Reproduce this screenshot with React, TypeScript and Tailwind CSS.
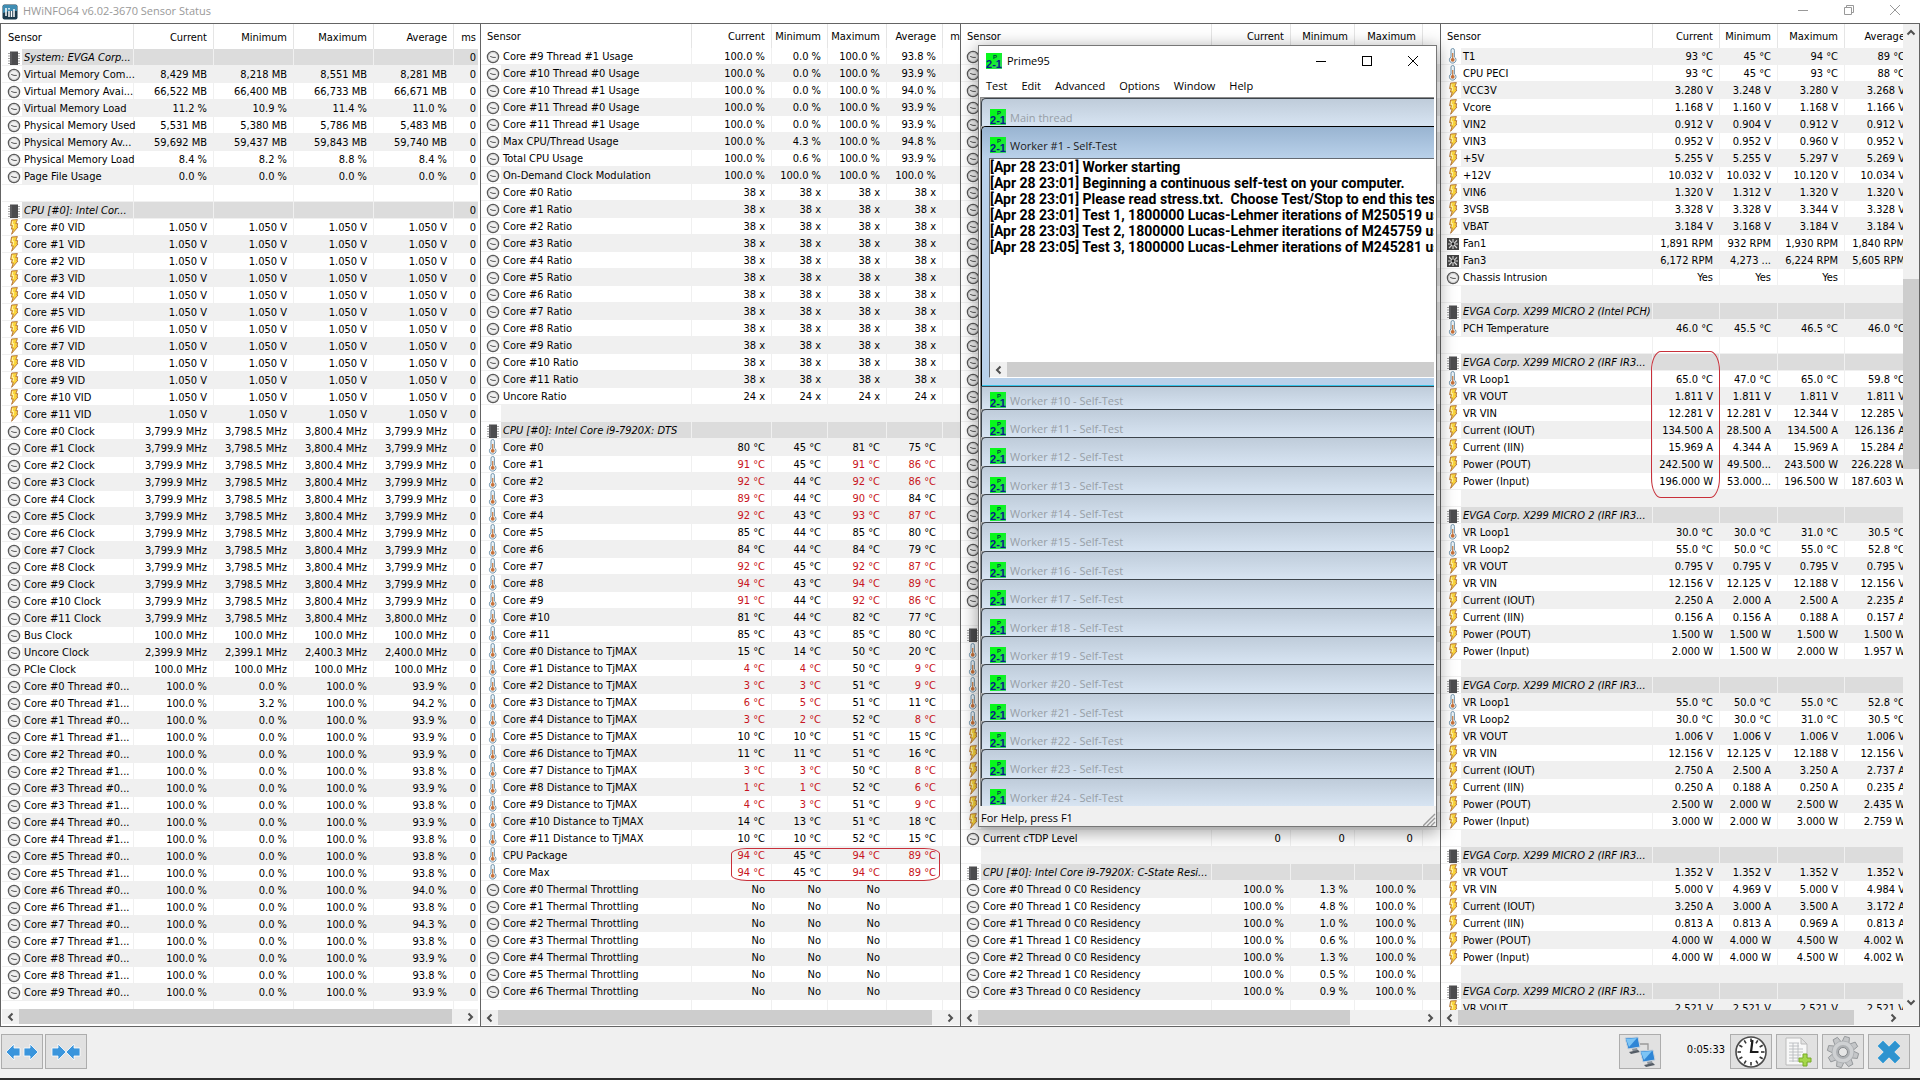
import React from "react";

type Kind = "clock" | "bolt" | "temp" | "fan" | "chip" | "none";
type Row = { kind: Kind; name: string; values: string[]; section?: boolean };

const row = (kind: Kind, name: string, values: string): Row => ({
  kind,
  name,
  values: values === "" ? [] : values.split("|"),
});
const section = (name: string, values = ""): Row => ({ ...row("chip", name, values), section: true });
const blank = (): Row => row("none", "", "");
const range = (n: number, from = 0) => Array.from({ length: n }, (_, i) => i + from);

const threadUsage = [
  "0.0 %|100.0 %|93.9 %", "3.2 %|100.0 %|94.2 %",
  "0.0 %|100.0 %|93.9 %", "0.0 %|100.0 %|93.9 %",
  "0.0 %|100.0 %|93.9 %", "0.0 %|100.0 %|93.8 %",
  "0.0 %|100.0 %|93.9 %", "0.0 %|100.0 %|93.8 %",
  "0.0 %|100.0 %|93.9 %", "0.0 %|100.0 %|93.8 %",
  "0.0 %|100.0 %|93.8 %", "0.0 %|100.0 %|93.8 %",
  "0.0 %|100.0 %|94.0 %", "0.0 %|100.0 %|93.8 %",
  "0.0 %|100.0 %|94.3 %", "0.0 %|100.0 %|93.8 %",
  "0.0 %|100.0 %|93.9 %", "0.0 %|100.0 %|93.8 %",
  "0.0 %|100.0 %|93.9 %",
];

const systemRows: Row[] = [
  section("System: EVGA Corp...", "||||0"),
  row("clock", "Virtual Memory Com...", "8,429 MB|8,218 MB|8,551 MB|8,281 MB|0"),
  row("clock", "Virtual Memory Avai...", "66,522 MB|66,400 MB|66,733 MB|66,671 MB|0"),
  row("clock", "Virtual Memory Load", "11.2 %|10.9 %|11.4 %|11.0 %|0"),
  row("clock", "Physical Memory Used", "5,531 MB|5,380 MB|5,786 MB|5,483 MB|0"),
  row("clock", "Physical Memory Av...", "59,692 MB|59,437 MB|59,843 MB|59,740 MB|0"),
  row("clock", "Physical Memory Load", "8.4 %|8.2 %|8.8 %|8.4 %|0"),
  row("clock", "Page File Usage", "0.0 %|0.0 %|0.0 %|0.0 %|0"),
  blank(),
  section("CPU [#0]: Intel Cor...", "||||0"),
  ...range(12).map((i) => row("bolt", `Core #${i} VID`, "1.050 V|1.050 V|1.050 V|1.050 V|0")),
  ...range(12).map((i) =>
    row("clock", `Core #${i} Clock`, `3,799.9 MHz|3,798.5 MHz|3,800.4 MHz|${i === 11 ? "3,800.0" : "3,799.9"} MHz|0`),
  ),
  row("clock", "Bus Clock", "100.0 MHz|100.0 MHz|100.0 MHz|100.0 MHz|0"),
  row("clock", "Uncore Clock", "2,399.9 MHz|2,399.1 MHz|2,400.3 MHz|2,400.0 MHz|0"),
  row("clock", "PCIe Clock", "100.0 MHz|100.0 MHz|100.0 MHz|100.0 MHz|0"),
  ...threadUsage.map((v, i) => row("clock", `Core #${Math.floor(i / 2)} Thread #${i % 2}...`, `100.0 %|${v}|0`)),
  blank(),
];

// A leading "!" marks a reading past its alarm limit.
const dts = [
  "80|45|81|75", "!91|45|!91|!86", "!92|44|!92|!86", "!89|44|!90|84", "!92|43|!93|!87", "85|44|85|80",
  "84|44|84|79", "!92|45|!92|!87", "!94|43|!94|!89", "!91|44|!92|!86", "81|44|82|77", "85|43|85|80",
];
const distance = [
  "15|14|50|20", "!4|!4|50|!9", "!3|!3|51|!9", "!6|!5|51|11", "!3|!2|52|!8", "10|10|51|15",
  "11|11|51|16", "!3|!3|50|!8", "!1|!1|52|!6", "!4|!3|51|!9", "14|13|51|18", "10|10|52|15",
];
const celsius = (v: string) => v.split("|").map((x) => `${x} °C`).join("|");

const cpuRows: Row[] = [
  row("clock", "Core #9 Thread #1 Usage", "100.0 %|0.0 %|100.0 %|93.8 %"),
  row("clock", "Core #10 Thread #0 Usage", "100.0 %|0.0 %|100.0 %|93.9 %"),
  row("clock", "Core #10 Thread #1 Usage", "100.0 %|0.0 %|100.0 %|94.0 %"),
  row("clock", "Core #11 Thread #0 Usage", "100.0 %|0.0 %|100.0 %|93.9 %"),
  row("clock", "Core #11 Thread #1 Usage", "100.0 %|0.0 %|100.0 %|93.9 %"),
  row("clock", "Max CPU/Thread Usage", "100.0 %|4.3 %|100.0 %|94.8 %"),
  row("clock", "Total CPU Usage", "100.0 %|0.6 %|100.0 %|93.9 %"),
  row("clock", "On-Demand Clock Modulation", "100.0 %|100.0 %|100.0 %|100.0 %"),
  ...range(12).map((i) => row("clock", `Core #${i} Ratio`, "38 x|38 x|38 x|38 x")),
  row("clock", "Uncore Ratio", "24 x|24 x|24 x|24 x"),
  blank(),
  section("CPU [#0]: Intel Core i9-7920X: DTS"),
  ...dts.map((v, i) => row("temp", `Core #${i}`, celsius(v))),
  ...distance.map((v, i) => row("temp", `Core #${i} Distance to TjMAX`, celsius(v))),
  row("temp", "CPU Package", celsius("!94|45|!94|!89")),
  row("temp", "Core Max", celsius("!94|45|!94|!89")),
  ...range(7).map((i) => row("clock", `Core #${i} Thermal Throttling`, "No|No|No|")),
  blank(),
];

const residency = ["1.3", "4.8", "1.0", "0.6", "1.3", "0.5", "0.9"];
const cstateRows: Row[] = [
  ...range(33).map(() => row("clock", "", "")),
  blank(),
  section(""),
  ...range(5).map(() => row("temp", "", "")),
  ...range(6).map(() => row("bolt", "", "")),
  row("clock", "Current cTDP Level", "0 |0 |0 "),
  blank(),
  section("CPU [#0]: Intel Core i9-7920X: C-State Resi..."),
  ...residency.map((v, i) =>
    row("clock", `Core #${Math.floor(i / 2)} Thread ${i % 2} C0 Residency`, `100.0 %|${v} %|100.0 %`),
  ),
  blank(),
];

const boardRows: Row[] = [
  row("temp", "T1", celsius("93|45|94|89")),
  row("temp", "CPU PECI", celsius("93|45|93|88")),
  row("bolt", "VCC3V", "3.280 V|3.248 V|3.280 V|3.268 V"),
  row("bolt", "Vcore", "1.168 V|1.160 V|1.168 V|1.166 V"),
  row("bolt", "VIN2", "0.912 V|0.904 V|0.912 V|0.912 V"),
  row("bolt", "VIN3", "0.952 V|0.952 V|0.960 V|0.952 V"),
  row("bolt", "+5V", "5.255 V|5.255 V|5.297 V|5.269 V"),
  row("bolt", "+12V", "10.032 V|10.032 V|10.120 V|10.034 V"),
  row("bolt", "VIN6", "1.320 V|1.312 V|1.320 V|1.320 V"),
  row("bolt", "3VSB", "3.328 V|3.328 V|3.344 V|3.328 V"),
  row("bolt", "VBAT", "3.184 V|3.168 V|3.184 V|3.184 V"),
  row("fan", "Fan1", "1,891 RPM|932 RPM|1,930 RPM|1,840 RPM"),
  row("fan", "Fan3", "6,172 RPM|4,273 ...|6,224 RPM|5,605 RPM"),
  row("clock", "Chassis Intrusion", "Yes|Yes|Yes|"),
  blank(),
  section("EVGA Corp. X299 MICRO 2 (Intel PCH)"),
  row("temp", "PCH Temperature", "46.0 °C|45.5 °C|46.5 °C|46.0 °C"),
  blank(),
  section("EVGA Corp. X299 MICRO 2 (IRF IR3..."),
  row("temp", "VR Loop1", "65.0 °C|47.0 °C|65.0 °C|59.8 °C"),
  row("bolt", "VR VOUT", "1.811 V|1.811 V|1.811 V|1.811 V"),
  row("bolt", "VR VIN", "12.281 V|12.281 V|12.344 V|12.285 V"),
  row("bolt", "Current (IOUT)", "134.500 A|28.500 A|134.500 A|126.136 A"),
  row("bolt", "Current (IIN)", "15.969 A|4.344 A|15.969 A|15.284 A"),
  row("bolt", "Power (POUT)", "242.500 W|49.500...|243.500 W|226.228 W"),
  row("bolt", "Power (Input)", "196.000 W|53.000...|196.500 W|187.603 W"),
  blank(),
  section("EVGA Corp. X299 MICRO 2 (IRF IR3..."),
  row("temp", "VR Loop1", "30.0 °C|30.0 °C|31.0 °C|30.5 °C"),
  row("temp", "VR Loop2", "55.0 °C|50.0 °C|55.0 °C|52.8 °C"),
  row("bolt", "VR VOUT", "0.795 V|0.795 V|0.795 V|0.795 V"),
  row("bolt", "VR VIN", "12.156 V|12.125 V|12.188 V|12.156 V"),
  row("bolt", "Current (IOUT)", "2.250 A|2.000 A|2.500 A|2.235 A"),
  row("bolt", "Current (IIN)", "0.156 A|0.156 A|0.188 A|0.157 A"),
  row("bolt", "Power (POUT)", "1.500 W|1.500 W|1.500 W|1.500 W"),
  row("bolt", "Power (Input)", "2.000 W|1.500 W|2.000 W|1.957 W"),
  blank(),
  section("EVGA Corp. X299 MICRO 2 (IRF IR3..."),
  row("temp", "VR Loop1", "55.0 °C|50.0 °C|55.0 °C|52.8 °C"),
  row("temp", "VR Loop2", "30.0 °C|30.0 °C|31.0 °C|30.5 °C"),
  row("bolt", "VR VOUT", "1.006 V|1.006 V|1.006 V|1.006 V"),
  row("bolt", "VR VIN", "12.156 V|12.125 V|12.188 V|12.156 V"),
  row("bolt", "Current (IOUT)", "2.750 A|2.500 A|3.250 A|2.737 A"),
  row("bolt", "Current (IIN)", "0.250 A|0.188 A|0.250 A|0.235 A"),
  row("bolt", "Power (POUT)", "2.500 W|2.000 W|2.500 W|2.435 W"),
  row("bolt", "Power (Input)", "3.000 W|2.000 W|3.000 W|2.759 W"),
  blank(),
  section("EVGA Corp. X299 MICRO 2 (IRF IR3..."),
  row("bolt", "VR VOUT", "1.352 V|1.352 V|1.352 V|1.352 V"),
  row("bolt", "VR VIN", "5.000 V|4.969 V|5.000 V|4.984 V"),
  row("bolt", "Current (IOUT)", "3.250 A|3.000 A|3.500 A|3.172 A"),
  row("bolt", "Current (IIN)", "0.813 A|0.813 A|0.969 A|0.813 A"),
  row("bolt", "Power (POUT)", "4.000 W|4.000 W|4.500 W|4.002 W"),
  row("bolt", "Power (Input)", "4.000 W|4.000 W|4.500 W|4.002 W"),
  blank(),
  section("EVGA Corp. X299 MICRO 2 (IRF IR3..."),
  row("bolt", "VR VOUT", "2.521 V|2.521 V|2.521 V|2.521 V"),
];

function SensorIcon({ kind }: { kind: Kind }) {
  switch (kind) {
    case "clock":
      return (
        <svg width="14" height="14" viewBox="0 0 14 14" className="block">
          <circle cx="7" cy="7" r="5.6" fill="#f1f1f1" stroke="#5a5a5a" strokeWidth="1.3" />
          <circle cx="7" cy="7" r="4.5" fill="none" stroke="#c4c4c4" strokeWidth="0.8" />
          <path d="M4.2 6.4L7 7.4h2.8" fill="none" stroke="#555" strokeWidth="1" />
        </svg>
      );
    case "bolt":
      return (
        <svg width="14" height="16" viewBox="0 0 14 16" className="block">
          <path
            d="M4.6 1L10.4.6 8.8 4.6h1.9L10 8h1L4.6 15.3l1.6-5.2H4.4l.9-3.4H3.6z"
            fill="#fbd53a"
            stroke="#b0703a"
            strokeWidth="0.9"
          />
          <path d="M5.8 2.2L5.2 5.5h1.6L6.2 9" fill="none" stroke="#fff6b8" strokeWidth="0.9" />
        </svg>
      );
    case "temp":
      return (
        <svg width="14" height="16" viewBox="0 0 14 16" className="block">
          <path d="M5 9V2.2a1.7 1.7 0 0 1 3.4 0V9a3.3 3.3 0 1 1-3.4 0z" fill="#eef4f8" stroke="#7295ad" strokeWidth="1" />
          <path d="M6.7 5v6" stroke="#c9834f" strokeWidth="1.3" />
          <circle cx="6.7" cy="11.8" r="1.9" fill="#c8723a" />
        </svg>
      );
    case "fan":
      return (
        <svg width="14" height="14" viewBox="0 0 14 14" className="block">
          <rect x="1" y="1" width="12" height="12" fill="#444" />
          <path
            d="M7 6V2M8 6.3l3-3M8 7h4M8 8l3 3M7 8v4M6 8l-3 3M6 7H2M6 6L3 3"
            stroke="#ddd"
            strokeWidth="1.1"
          />
          <circle cx="7" cy="7" r="1.4" fill="#222" />
        </svg>
      );
    case "chip":
      return (
        <svg width="14" height="14" viewBox="0 0 14 14" className="block">
          <path d="M1 2.5h12M1 5h12M1 7.5h12M1 10h12M1 12.5h12" stroke="#a3a3a3" strokeWidth="1" />
          <rect x="3" y="0.5" width="8" height="13.5" fill="#4c4c4e" />
          <path d="M4 1.5v11.5" stroke="#6d6d70" strokeWidth="1" />
        </svg>
      );
    default:
      return null;
  }
}

function Arrow({ dir }: { dir: "left" | "right" | "up" | "down" }) {
  const d = {
    left: "M6.5 1.5L3 5l3.5 3.5",
    right: "M3.5 1.5L7 5 3.5 8.5",
    up: "M1.5 6.5L5 3l3.5 3.5",
    down: "M1.5 3.5L5 7l3.5-3.5",
  }[dir];
  return (
    <svg width="10" height="10" viewBox="0 0 10 10" className="block">
      <path d={d} fill="none" stroke="#505050" strokeWidth="2" />
    </svg>
  );
}

function HScroll({ thumb }: { thumb: string }) {
  return (
    <div className="flex h-[15px] shrink-0 bg-[#f0f0f0]">
      <button aria-label="Scroll left" className="flex w-[17px] items-center justify-center">
        <Arrow dir="left" />
      </button>
      <div className="flex-1">
        <div className={`h-full bg-[#cdcdcd] ${thumb}`} />
      </div>
      <button aria-label="Scroll right" className="flex w-[17px] items-center justify-center">
        <Arrow dir="right" />
      </button>
    </div>
  );
}

type Column = { label: string; width: string };

function SensorTable({
  columns,
  rows,
  grayEven,
  tableWidth,
  headHeight,
}: {
  columns: Column[];
  rows: Row[];
  grayEven?: boolean;
  tableWidth: string;
  headHeight: string;
}) {
  return (
    <table className={`table-fixed border-separate border-spacing-0 whitespace-pre ${tableWidth}`}>
      <colgroup>
        <col className="w-[20px]" />
        <col />
        {columns.map((c, i) => (
          <col key={i} className={c.width} />
        ))}
      </colgroup>
      <thead>
        <tr className={headHeight}>
          <th colSpan={2} className="border-r border-[#e5e5e5] p-0 pt-[3px] pl-[6px] text-left font-normal">
            Sensor
          </th>
          {columns.map((c, i) => (
            <th
              key={i}
              className={`p-0 pt-[3px] text-right font-normal ${
                i === columns.length - 1 && c.label !== "Average" ? "pr-[2px]" : "border-r border-[#e5e5e5] pr-[6px]"
              }`}
            >
              {c.label}
            </th>
          ))}
        </tr>
      </thead>
      <tbody>
        {rows.map((r, i) => {
          const gray = (i % 2 === 0) === !!grayEven;
          const bg = r.section ? "bg-[#dcdcdc]" : gray ? "bg-[#f0f0f0]" : "bg-white";
          return (
            <tr key={i} className="h-[17px] leading-[14px]">
              <td className="h-[17px] border-b border-[#f0f0f0] bg-white p-0 pl-[5px]">
                <div className="flex h-[16px] items-end">
                  <SensorIcon kind={r.kind} />
                </div>
              </td>
              <td
                className={`h-[17px] border-r border-b border-[#f0f0f0] p-0 pt-[2px] pl-[2px] ${bg} ${
                  r.section ? "italic" : ""
                }`}
              >
                {r.name}
              </td>
              {columns.map((c, j) => {
                const value = r.values[j] ?? "";
                const alarm = value.startsWith("!");
                const last = j === columns.length - 1 && c.label !== "Average";
                return (
                  <td
                    key={j}
                    className={`h-[17px] border-b border-[#f0f0f0] p-0 pt-[2px] text-right ${bg} ${
                      last ? "pr-[2px]" : "border-r pr-[6px]"
                    } ${alarm ? "text-[#c81420]" : ""}`}
                  >
                    {alarm ? value.slice(1) : value}
                  </td>
                );
              })}
            </tr>
          );
        })}
      </tbody>
    </table>
  );
}

function PrimeIcon() {
  return (
    <svg width="16" height="16" viewBox="0 0 16 16" className="block shrink-0">
      <defs>
        <linearGradient id="primeGreen" x1="0" y1="0" x2="1" y2="1">
          <stop offset="0.4" stopColor="#08f81c" />
          <stop offset="1" stopColor="#3fd070" />
        </linearGradient>
      </defs>
      <rect width="16" height="16" fill="url(#primeGreen)" />
      <text x="9" y="5.6" textAnchor="middle" fontSize="6" fontWeight="700" fontFamily="Liberation Sans, sans-serif" fill="#06364a">
        P
      </text>
      <text x="8" y="14.8" textAnchor="middle" fontSize="11" fontWeight="700" fontFamily="Liberation Sans, sans-serif" fill="#0a1c88">
        2-1
      </text>
    </svg>
  );
}

function MdiBar({ title, short }: { title: string; short?: boolean }) {
  return (
    <div
      className={`flex min-h-0 items-start gap-1 overflow-hidden border-t border-l border-[#3c444c] bg-linear-to-b from-[#bfccda] to-[#d7e4f2] pl-2 text-[#979ea6] ${
        short ? "h-[23px] shrink-0 pt-[5px]" : "flex-1 rounded-tl-[5px] pt-[10px]"
      }`}
    >
      <PrimeIcon />
      <span className="leading-[18px]">{title}</span>
    </div>
  );
}

const log = [
  "[Apr 28 23:01] Worker starting",
  "[Apr 28 23:01] Beginning a continuous self-test on your computer.",
  "[Apr 28 23:01] Please read stress.txt.  Choose Test/Stop to end this test.",
  "[Apr 28 23:01] Test 1, 1800000 Lucas-Lehmer iterations of M250519 using",
  "[Apr 28 23:03] Test 2, 1800000 Lucas-Lehmer iterations of M245759 using",
  "[Apr 28 23:05] Test 3, 1800000 Lucas-Lehmer iterations of M245281 using",
];

function PrimeWindow() {
  return (
    <div className="absolute top-[45px] left-[978px] flex h-[782px] w-[459px] flex-col border border-[#777] bg-white font-['Open_Sans',sans-serif] text-[11px] text-black shadow-[0_4px_16px_2px_rgba(0,0,0,0.35)]">
      <div className="flex h-[30px] shrink-0 items-center pl-[7px]">
        <PrimeIcon />
        <span className="flex-1 pl-[5px]">Prime95</span>
        <button aria-label="Minimize" className="flex h-full w-[46px] items-center justify-center">
          <svg width="10" height="10"><path d="M0 5.5h10" stroke="#000" /></svg>
        </button>
        <button aria-label="Maximize" className="flex h-full w-[46px] items-center justify-center">
          <svg width="10" height="10"><rect x="0.5" y="0.5" width="9" height="9" fill="none" stroke="#000" /></svg>
        </button>
        <button aria-label="Close" className="flex h-full w-[46px] items-center justify-center">
          <svg width="10" height="10"><path d="M0 0l10 10M10 0L0 10" stroke="#000" /></svg>
        </button>
      </div>
      <nav className="flex h-[20px] shrink-0 items-center">
        {["Test", "Edit", "Advanced", "Options", "Window", "Help"].map((m) => (
          <button key={m} className="px-[7px]">
            {m}
          </button>
        ))}
      </nav>
      <div className="mt-px mr-[2px] ml-px flex min-h-0 flex-1 flex-col overflow-hidden border-t border-l border-[#8c8c8c] bg-[#ababab] whitespace-pre">
        <div className="flex h-[28px] shrink-0">
          <MdiBar title="Main thread" />
        </div>
        <div className="flex h-[260px] shrink-0 flex-col rounded-tl-[5px] border-t border-l border-black bg-[#b9d1ea]">
          <div className="flex h-[31px] shrink-0 items-start gap-1 rounded-tl-[4px] bg-linear-to-b from-[#99b4d1] to-[#b9d1ea] pt-[10px] pl-2 text-[#1a1a1a]">
            <PrimeIcon />
            <span className="leading-[18px]">Worker #1 - Self-Test</span>
          </div>
          <div className="ml-[7px] flex min-h-0 flex-1 flex-col border-t border-b border-l border-[#646a72] border-b-white bg-white">
            <div className="min-h-0 flex-1 overflow-hidden font-['Roboto',sans-serif] text-[14px] leading-[16px] font-bold text-black">
              {log.map((line) => (
                <div key={line}>{line}</div>
              ))}
            </div>
            <div className="flex h-[15px] shrink-0 bg-[#cdcdcd]">
              <button aria-label="Scroll log left" className="flex w-[17px] items-center justify-center bg-[#f0f0f0]">
                <Arrow dir="left" />
              </button>
            </div>
          </div>
          <div className="h-[8px] shrink-0 border-b border-[#35c4ea]" />
        </div>
        <MdiBar title="Worker #10 - Self-Test" short />
        {range(14, 11).map((n) => (
          <MdiBar key={n} title={`Worker #${n} - Self-Test`} />
        ))}
      </div>
      <div className="flex h-[20px] shrink-0 items-end justify-between bg-[#f0f0f0] pl-[2px]">
        <span>For Help, press F1</span>
        <svg width="13" height="13">
          <path d="M0 13L12 1M4 13l8-8M8 13l4-4" stroke="#9a9a9a" strokeWidth="1.4" />
        </svg>
      </div>
    </div>
  );
}

function ToolButton({ label, children }: { label: string; children: React.ReactNode }) {
  return (
    <button
      aria-label={label}
      className="flex h-[35px] w-[42px] items-center justify-center border border-[#adadad] bg-[#e1e1e1]"
    >
      {children}
    </button>
  );
}

const arrowLeft = "M0 9L8 1v4h6v8H8v4z";
const arrowRight = "M14 9L6 1v4H0v8h6v4z";

function Monitor({ x, y }: { x: number; y: number }) {
  return (
    <g transform={`translate(${x} ${y})`}>
      <path d="M1 1l13-1 2 10-12 2z" fill="#2f86d6" stroke="#c9d3dc" strokeWidth="1" />
      <path d="M2 2l11-1-8 9z" fill="#7cc4f5" />
      <path d="M8 12l5-1 1 3-5 1z" fill="#8c949c" />
      <path d="M5 15l9-2 2 2-9 2z" fill="#555d66" />
    </g>
  );
}

const panelBase = "flex min-w-0 flex-col border-t border-b border-l border-[#646464] bg-white";
const ticks = range(12).map((i) => i * 30);
const teeth = range(8).map((i) => i * 45);

export default function App() {
  return (
    <div className="relative flex h-screen flex-col overflow-hidden bg-[#f0f0f0] font-['DejaVu_Sans_Condensed','DejaVu_Sans',sans-serif] text-[11px] text-black">
      <header className="flex h-[23px] shrink-0 items-center bg-white pr-[2px] pl-[2px]">
        <svg width="16" height="16" viewBox="0 0 16 16" className="block">
          <rect x="0.5" y="0.5" width="15" height="15" rx="2" fill="#1b3a4d" />
          <path d="M1 2q0-1 1-1h12q1 0 1 1v5Q8 6 1 9z" fill="#3f8db3" />
          <path d="M4 4v8M7 7v6M9.5 7v6M12 5v8M7 4v1.5" stroke="#fff" strokeWidth="1.5" />
        </svg>
        <h1 className="flex-1 pl-[5px] font-['Open_Sans',sans-serif] text-[11px] text-[#999]">
          HWiNFO64 v6.02-3670 Sensor Status
        </h1>
        <div className="flex self-start">
          <button aria-label="Minimize window" className="flex h-[20px] w-[46px] items-center justify-center">
            <svg width="10" height="10"><path d="M0 5.5h10" stroke="#999" /></svg>
          </button>
          <button aria-label="Restore window" className="flex h-[20px] w-[46px] items-center justify-center">
            <svg width="10" height="10">
              <path d="M0.5 2.5h7v7h-7zM2.5 2.5v-2h7v7h-2" fill="none" stroke="#999" />
            </svg>
          </button>
          <button aria-label="Close window" className="flex h-[20px] w-[46px] items-center justify-center">
            <svg width="10" height="10"><path d="M0 0l10 10M10 0L0 10" stroke="#999" /></svg>
          </button>
        </div>
      </header>

      <main className="grid min-h-0 flex-1 grid-cols-4 grid-rows-1">
        <section className={`${panelBase} pr-[2px] pb-[2px] pl-px`}>
          <div className="min-h-0 flex-1 overflow-hidden">
            <SensorTable
              tableWidth="w-full"
              headHeight="h-[25px]"
              rows={systemRows}
              columns={[
                { label: "Current", width: "w-[80px]" },
                { label: "Minimum", width: "w-[80px]" },
                { label: "Maximum", width: "w-[80px]" },
                { label: "Average", width: "w-[80px]" },
                { label: "ms", width: "w-[24px]" },
              ]}
            />
          </div>
          <HScroll thumb="w-[98%]" />
        </section>

        <section className={`${panelBase} relative pb-px`}>
          <div className="min-h-0 flex-1 overflow-hidden">
            <SensorTable
              tableWidth="w-[calc(100%+7px)]"
              headHeight="h-[24px]"
              rows={cpuRows}
              columns={[
                { label: "Current", width: "w-[80px]" },
                { label: "Minimum", width: "w-[56px]" },
                { label: "Maximum", width: "w-[59px]" },
                { label: "Average", width: "w-[56px]" },
                { label: "ms", width: "w-[24px]" },
              ]}
            />
          </div>
          <div className="bg-[#f0f0f0] pr-[2px]">
            <HScroll thumb="w-[98%]" />
          </div>
          <div className="absolute top-[824px] right-[20px] h-[33px] w-[209px] rounded-[16px/6px] border border-[#c8303a]" />
        </section>

        <section className={`${panelBase} pb-px`}>
          <div className="min-h-0 flex-1 overflow-hidden">
            <SensorTable
              tableWidth="w-full"
              headHeight="h-[24px]"
              rows={cstateRows}
              columns={[
                { label: "Current", width: "w-[79px]" },
                { label: "Minimum", width: "w-[64px]" },
                { label: "Maximum", width: "w-[68px]" },
                { label: "", width: "w-[17px]" },
              ]}
            />
          </div>
          <div className="bg-[#f0f0f0] pr-[2px]">
            <HScroll thumb="w-[84%]" />
          </div>
        </section>

        <section className={`${panelBase} relative border-r pb-px`}>
          <div className="flex min-h-0 flex-1">
            <div className="min-w-0 flex-1 overflow-hidden">
              <SensorTable
                grayEven
                tableWidth="w-[calc(100%+9px)]"
                headHeight="h-[24px]"
                rows={boardRows}
                columns={[
                  { label: "Current", width: "w-[67px]" },
                  { label: "Minimum", width: "w-[58px]" },
                  { label: "Maximum", width: "w-[67px]" },
                  { label: "Average", width: "w-[67px]" },
                ]}
              />
            </div>
            <div className="flex w-[16px] shrink-0 flex-col bg-[#f0f0f0]">
              <button aria-label="Scroll up" className="flex h-[17px] items-center justify-center">
                <Arrow dir="up" />
              </button>
              <div className="flex flex-1 flex-col">
                <div className="h-[25%]" />
                <div className="h-[20%] bg-[#cdcdcd]" />
              </div>
              <button aria-label="Scroll down" className="flex h-[17px] items-center justify-center">
                <Arrow dir="down" />
              </button>
            </div>
          </div>
          <div className="bg-[#f0f0f0] pr-[18px]">
            <HScroll thumb="w-[93%]" />
          </div>
          <div className="absolute top-[327px] right-[199px] h-[147px] w-[69px] rounded-[10px/20px] border border-[#c8303a]" />
        </section>
      </main>

      <footer className="flex h-[53px] shrink-0 items-start border-b-2 border-[#2d2d2d] pt-[7px] pr-[10px] pl-px">
        <div className="flex flex-1 gap-[2px]">
          <ToolButton label="Expand columns">
            <svg width="32" height="18" viewBox="0 0 32 18">
              <path d={arrowLeft} fill="#3a95dc" stroke="#fff" strokeWidth="0.8" />
              <path d={arrowRight} transform="translate(18 0)" fill="#3a95dc" stroke="#fff" strokeWidth="0.8" />
            </svg>
          </ToolButton>
          <ToolButton label="Shrink columns">
            <svg width="30" height="18" viewBox="0 0 30 18">
              <path d={arrowRight} transform="translate(1 0)" fill="#3a95dc" stroke="#fff" strokeWidth="0.8" />
              <path d={arrowLeft} transform="translate(15 0)" fill="#3a95dc" stroke="#fff" strokeWidth="0.8" />
            </svg>
          </ToolButton>
        </div>
        <ToolButton label="Network monitoring">
          <svg width="34" height="32" viewBox="0 0 34 32">
            <path d="M17 8h8v7" fill="none" stroke="#999" strokeWidth="1.3" />
            <Monitor x={1} y={1} />
            <Monitor x={16} y={14} />
          </svg>
        </ToolButton>
        <span className="w-[69px] pt-2 pr-[5px] text-right">0:05:33</span>
        <div className="flex gap-1">
          <ToolButton label="Reset timer">
            <svg width="32" height="32" viewBox="0 0 32 32">
              <circle cx="16" cy="16" r="15" fill="#fff" stroke="#4a4a4a" strokeWidth="1.6" />
              {ticks.map((a) => (
                <path key={a} d="M16 2.5v3.5" transform={`rotate(${a} 16 16)`} stroke="#333" strokeWidth="1.6" />
              ))}
              <path d="M17.5 4L16 16h7.5" fill="none" stroke="#1c1c1c" strokeWidth="2.2" />
            </svg>
          </ToolButton>
          <ToolButton label="Start logging">
            <svg width="32" height="32" viewBox="0 0 32 32">
              <path d="M5 2h15l6 6v21H5z" fill="#f8f8f8" stroke="#bbb" />
              <path d="M20 2v6h6z" fill="#e2e2e2" stroke="#bbb" />
              <path
                d="M8 7h10M8 10h10M8 13h14M8 16h14M8 19h12M8 22h10M8 25h9M12 7v19M17 7v19"
                stroke="#b9bcc0"
                strokeWidth="0.9"
              />
              <path d="M22 18h4v4h4v4h-4v4h-4v-4h-4v-4h4z" fill="#a5d84a" stroke="#78aa28" />
            </svg>
          </ToolButton>
          <ToolButton label="Settings">
            <svg width="34" height="34" viewBox="0 0 34 34">
              {teeth.map((a) => (
                <path
                  key={a}
                  d="M13.500 7L14.500 1.500h5l1 5.500z"
                  transform={`rotate(${a + 15} 17 17)`}
                  fill="#c4c6c8"
                  stroke="#8e9194"
                  strokeWidth="0.8"
                />
              ))}
              <circle cx="17" cy="17" r="11" fill="#cfd1d3" stroke="#a0a3a6" strokeWidth="0.6" />
              <circle cx="17" cy="17" r="7" fill="#aeb1b4" />
              <circle cx="17" cy="17" r="4.5" fill="#e6e6e6" stroke="#85888b" />
            </svg>
          </ToolButton>
          <ToolButton label="Close sensors">
            <svg width="26" height="26" viewBox="0 0 26 26">
              <path
                d="M7 2l6 6 6-6 5 5-6 6 6 6-5 5-6-6-6 6-5-5 6-6-6-6z"
                fill="#2e93cf"
                stroke="#4aa8dc"
                strokeWidth="1"
                strokeLinejoin="round"
              />
            </svg>
          </ToolButton>
        </div>
      </footer>

      <PrimeWindow />
    </div>
  );
}
